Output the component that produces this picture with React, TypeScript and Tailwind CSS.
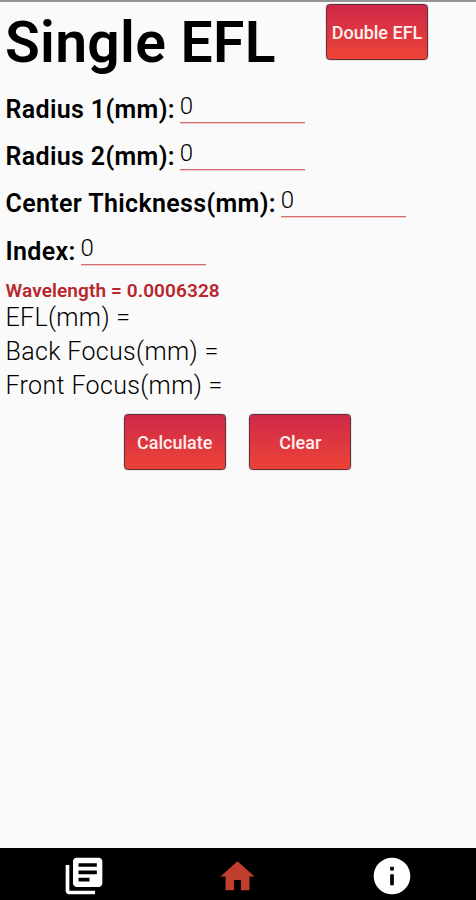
import { useState } from "react";
import { MdHome, MdInfo, MdLibraryBooks } from "react-icons/md";

const fields = [
  { key: "r1", label: "Radius 1(mm):" },
  { key: "r2", label: "Radius 2(mm):" },
  { key: "ct", label: "Center Thickness(mm):" },
  { key: "index", label: "Index:" },
];

const results = ["EFL(mm) =", "Back Focus(mm) =", "Front Focus(mm) ="];

function RedButton({ label, onClick }: { label: string; onClick?: () => void }) {
  return (
    <button
      onClick={onClick}
      className="h-14 w-[102px] shrink-0 whitespace-nowrap rounded-[4px] border border-[#5f2f3a] bg-linear-to-b from-[#cf2848] to-[#ec4335] text-[18px] font-medium text-[#fff0ee] shadow-[0_0_1px_#4a2a30]"
    >
      {label}
    </button>
  );
}

export default function App() {
  const [values, setValues] = useState<Record<string, string>>({});

  return (
    <div className="flex h-[900px] w-[476px] flex-col overflow-hidden border-t-2 border-[#959595] bg-[#fafafa] font-['Roboto',sans-serif] text-black">
      <header className="flex h-[84px] items-start pl-[5px] pt-0.5">
        <h1 className="w-[321px] whitespace-nowrap pt-1.5 text-[57px] font-semibold leading-[66px] tracking-[0.3px]">
          Single EFL
        </h1>
        <RedButton label="Double EFL" />
      </header>

      <main className="flex-1 pl-[5.5px]">
        {fields.map((f) => (
          <div key={f.key} className="flex h-[47.2px] items-start gap-[4.8px]">
            <label className="whitespace-nowrap pt-[9px] text-[25px] font-semibold leading-[30px] tracking-[0.35px]">
              {f.label}
            </label>
            <input
              value={values[f.key] ?? "0"}
              onChange={(e) => setValues({ ...values, [f.key]: e.target.value })}
              className="mt-[5px] h-8 w-[125px] border-b border-[#d07070] bg-transparent pb-px text-[24px] font-light shadow-[0_1px_0_#f0c8c8] outline-none"
            />
          </div>
        ))}

        <p className="pt-[5.4px] text-[19px] font-semibold leading-[22px] tracking-[0.1px] text-[#b9262c]">
          Wavelength = 0.0006328
        </p>
        <div className="pt-px">
          {results.map((r) => (
            <p key={r} className="h-[34px] text-[25px] font-light leading-[30px] tracking-[0.35px]">
              {r}
            </p>
          ))}
        </div>

        <div className="flex justify-center gap-[23.5px] pr-[6.5px] pt-[9px]">
          <RedButton label="Calculate" />
          <RedButton label="Clear" onClick={() => setValues({})} />
        </div>
      </main>

      <nav className="flex h-[52px] items-center justify-between bg-black px-[62px] pt-1 text-white">
        <MdLibraryBooks size={44} />
        <MdHome size={41} className="mr-0.5 text-[#bf3f2c]" />
        <MdInfo size={44} />
      </nav>
    </div>
  );
}
